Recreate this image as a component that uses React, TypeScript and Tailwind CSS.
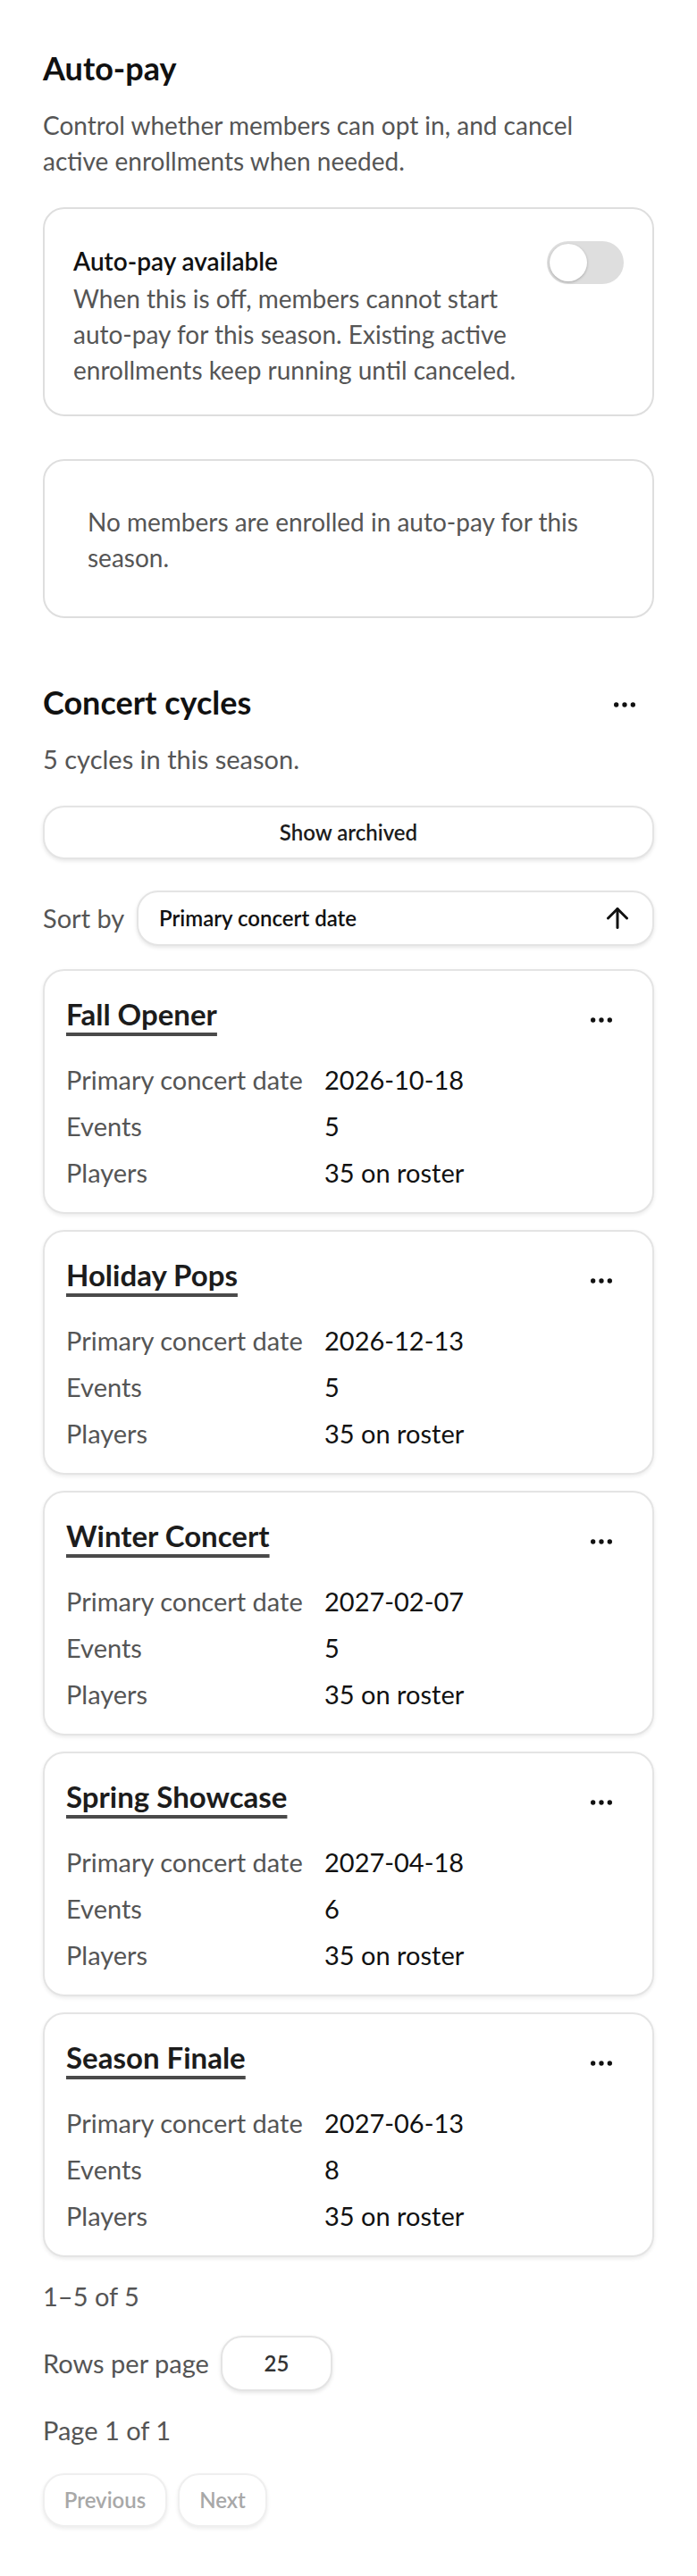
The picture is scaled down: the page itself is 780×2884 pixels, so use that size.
import { ArrowUp, Ellipsis } from "lucide-react";

const cycles = [
  { name: "Fall Opener", date: "2026-10-18", events: 5, players: 35 },
  { name: "Holiday Pops", date: "2026-12-13", events: 5, players: 35 },
  { name: "Winter Concert", date: "2027-02-07", events: 5, players: 35 },
  { name: "Spring Showcase", date: "2027-04-18", events: 6, players: 35 },
  { name: "Season Finale", date: "2027-06-13", events: 8, players: 35 },
];

function MoreButton() {
  return (
    <button className="mr-[9px] flex h-12 w-12 shrink-0 translate-y-[7px] items-center justify-center text-[#111]">
      <Ellipsis size={32} strokeWidth={2} />
    </button>
  );
}

function CycleCard({
  name,
  date,
  events,
  players,
}: {
  name: string;
  date: string;
  events: number;
  players: number;
}) {
  return (
    <div className="rounded-3xl border-2 border-[#e4e4e4] bg-white p-6 shadow-[0_2px_4px_rgba(0,0,0,0.08)]">
      <div className="flex items-start justify-between">
        <h3 className="text-[33px] font-bold leading-[48px] text-[#1c1c1c] underline decoration-[#4a4a4a] decoration-[4px] underline-offset-[8px]">
          {name}
        </h3>
        <MoreButton />
      </div>
      <dl className="mt-[30px] grid grid-cols-[289px_1fr] gap-y-3 text-[29px] leading-[40px]">
        <dt className="text-[#555]">Primary concert date</dt>
        <dd className="text-[#111]">{date}</dd>
        <dt className="text-[#555]">Events</dt>
        <dd className="text-[#111]">{events}</dd>
        <dt className="text-[#555]">Players</dt>
        <dd className="text-[#111]">{players} on roster</dd>
      </dl>
    </div>
  );
}

export default function App() {
  return (
    <div className="min-h-screen bg-white px-12 pb-[52px] pt-12 font-['Lato',sans-serif] text-[#111]">
      <section>
        <h2 className="text-[36px] font-bold leading-[56px]">Auto-pay</h2>
        <p className="mt-4 max-w-[620px] text-[28px] leading-[40px] text-[#555]">
          Control whether members can opt in, and cancel active enrollments when needed.
        </p>

        <div className="mt-8 flex items-start justify-between gap-6 rounded-3xl border-2 border-[#dedede] px-8 pb-[30px] pt-[36px]">
          <div className="flex-1">
            <div className="text-[28px] font-semibold leading-[44px] text-[#111]">Auto-pay available</div>
            <p className="text-[28px] leading-[40px] text-[#555]">
              When this is off, members cannot start auto-pay for this season. Existing active
              enrollments keep running until canceled.
            </p>
          </div>
          <div className="flex h-12 w-[86px] shrink-0 items-center rounded-full bg-[#dedede] p-[3px]">
            <div className="h-[42px] w-[42px] rounded-full bg-white shadow-[0_1px_3px_rgba(0,0,0,0.25)]" />
          </div>
        </div>

        <div className="mt-12 rounded-3xl border-2 border-[#dedede] px-12 pb-[46px] pt-12 text-[28px] leading-[40px] text-[#555]">
          No members are enrolled in auto-pay for this season.
        </div>
      </section>

      <section className="mt-[66px]">
        <div className="flex items-start justify-between">
          <h2 className="text-[36px] font-bold leading-[56px]">Concert cycles</h2>
          <MoreButton />
        </div>
        <p className="mt-4 text-[29px] leading-[40px] text-[#555]">5 cycles in this season.</p>

        <button className="mt-8 h-[60px] w-full rounded-3xl border-2 border-[#e4e4e4] bg-white text-[24px] font-semibold text-[#1c1c1c] shadow-[0_2px_4px_rgba(0,0,0,0.1)]">
          Show archived
        </button>

        <div className="mt-[35px] flex items-center">
          <span className="w-[105px] shrink-0 text-[29px] leading-[40px] text-[#555]">Sort by</span>
          <button className="flex h-[62px] flex-1 items-center justify-between rounded-3xl border-2 border-[#e4e4e4] bg-white pl-[23px] pr-[21px] text-[24px] font-semibold text-[#111] shadow-[0_2px_4px_rgba(0,0,0,0.1)]">
            <span>Primary concert date</span>
            <ArrowUp size={36} strokeWidth={2} />
          </button>
        </div>

        <div className="mt-[26px] flex flex-col gap-[18px]">
          {cycles.map((c) => (
            <CycleCard key={c.name} {...c} />
          ))}
        </div>

        <div className="mt-6 text-[29px] leading-[40px] text-[#555]">1–5 of 5</div>

        <div className="mt-6 flex items-center">
          <span className="w-[199px] shrink-0 text-[29px] leading-[40px] text-[#555]">Rows per page</span>
          <button className="h-[62px] w-[125px] rounded-3xl border-2 border-[#e4e4e4] bg-white text-[24px] font-semibold text-[#333] shadow-[0_2px_4px_rgba(0,0,0,0.1)]">
            25
          </button>
        </div>

        <div className="mt-6 text-[29px] leading-[40px] text-[#555]">Page 1 of 1</div>

        <div className="mt-[28px] flex gap-3">
          <button
            disabled
            className="h-[60px] w-[139px] rounded-3xl border-2 border-[#efefef] bg-white text-[24px] font-semibold text-[#a8a8a8] shadow-[0_2px_4px_rgba(0,0,0,0.08)]"
          >
            Previous
          </button>
          <button
            disabled
            className="h-[60px] w-[100px] rounded-3xl border-2 border-[#efefef] bg-white text-[24px] font-semibold text-[#a8a8a8] shadow-[0_2px_4px_rgba(0,0,0,0.08)]"
          >
            Next
          </button>
        </div>
      </section>
    </div>
  );
}
